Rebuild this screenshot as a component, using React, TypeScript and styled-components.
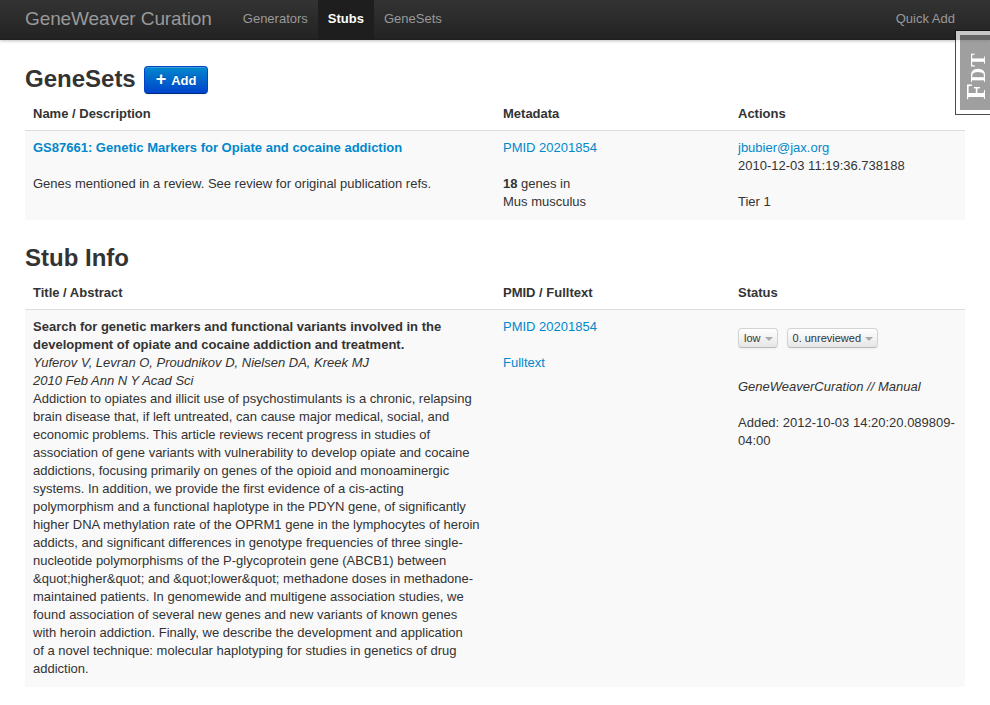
import React from "react";
import styled, { createGlobalStyle } from "styled-components";

const Global = createGlobalStyle`
  html, body { margin: 0; padding: 0; background: #fff; }
  body {
    font-family: "Liberation Sans", Arial, sans-serif;
    font-size: 13px;
    line-height: 18px;
    color: #333;
  }
  * { box-sizing: border-box; }
`;

const Navbar = styled.div`
  height: 40px;
  background: linear-gradient(to bottom, #333333, #222222);
  box-shadow: 0 1px 3px rgba(0,0,0,0.25), inset 0 -1px 0 rgba(0,0,0,0.1);
  position: relative;
  z-index: 2;
`;

const NavInner = styled.div`
  width: 940px;
  margin: 0 auto;
  height: 40px;
  display: flex;
  align-items: stretch;
`;

const Brand = styled.a`
  font-size: 19px;
  font-weight: 200;
  color: #999;
  text-decoration: none;
  display: flex;
  align-items: center;
  padding-bottom: 3px;
  margin-right: 21px;
  letter-spacing: -0.1px;
`;

const NavList = styled.div`
  display: flex;
  align-items: stretch;
`;

const NavLink = styled.a<{ $active?: boolean }>`
  display: flex;
  align-items: center;
  padding: 0 10px 3px;
  color: ${(p) => (p.$active ? "#fff" : "#999")};
  background: ${(p) => (p.$active ? "#1e1e1e" : "transparent")};
  font-weight: ${(p) => (p.$active ? "bold" : "normal")};
  text-decoration: none;
  font-size: 13px;
`;

const Spacer = styled.div`
  flex: 1;
`;

const Container = styled.div`
  width: 940px;
  margin: 0 auto;
  padding-top: 22px;
`;

const HeadingRow = styled.div`
  display: flex;
  align-items: center;
  gap: 8px;
  height: 34px;
`;

const H2 = styled.h2`
  margin: 0;
  font-size: 24px;
  line-height: 34px;
  font-weight: bold;
  color: #333;
`;

const PrimaryButton = styled.button`
  display: inline-flex;
  align-items: center;
  gap: 5px;
  height: 28px;
  padding: 0 10px 0 11px;
  margin-top: 2px;
  border: 1px solid #0044cc;
  border-bottom-color: #002a80;
  border-radius: 4px;
  background: linear-gradient(to bottom, #0088cc, #0044cc);
  color: #fff;
  font-family: "Liberation Sans", Arial, sans-serif;
  font-size: 13px;
  font-weight: bold;
  text-shadow: 0 -1px 0 rgba(0,0,0,0.25);
  box-shadow: inset 0 1px 0 rgba(255,255,255,0.2), 0 1px 2px rgba(0,0,0,0.05);
`;

const Plus = styled.span`
  font-size: 18px;
  line-height: 18px;
  margin-top: -2px;
`;

const Table = styled.table<{ $mb?: number }>`
  width: 100%;
  border-collapse: collapse;
  margin-bottom: ${(p) => p.$mb ?? 21}px;
  table-layout: fixed;
`;

const Th = styled.th<{ $w: string }>`
  width: ${(p) => p.$w};
  text-align: left;
  padding: 9px 8px 7px;
  font-weight: bold;
  line-height: 18px;
  vertical-align: bottom;
`;

const Tr = styled.tr`
  background: #f9f9f9;
`;

const Td = styled.td`
  padding: 8px 8px 9px;
  border-top: 1px solid #ddd;
  vertical-align: top;
  line-height: 18px;
`;

const Link = styled.a<{ $bold?: boolean }>`
  color: #0088cc;
  text-decoration: none;
  font-weight: ${(p) => (p.$bold ? "bold" : "normal")};
`;

const Line = styled.div<{ $gap?: number }>`
  margin-top: ${(p) => p.$gap ?? 0}px;
  white-space: nowrap;
`;

const Title = styled.div`
  font-weight: bold;
`;

const Italic = styled.div`
  font-style: italic;
`;

const Abstract = styled.div``;

const ButtonRow = styled.div`
  display: flex;
  gap: 9px;
  margin-top: 10px;
`;

const MiniButton = styled.span`
  display: inline-flex;
  align-items: center;
  gap: 4px;
  height: 20px;
  padding: 0 4px 0 5px;
  font-size: 11px;
  line-height: 17px;
  color: #333;
  border: 1px solid #d4d4d4;
  border-bottom-color: #bbb;
  border-radius: 4px;
  background: linear-gradient(to bottom, #ffffff, #e6e6e6);
  box-shadow: inset 0 1px 0 rgba(255,255,255,0.2), 0 1px 2px rgba(0,0,0,0.05);
`;

const Caret = styled.span`
  width: 0;
  height: 0;
  border-left: 4px solid transparent;
  border-right: 4px solid transparent;
  border-top: 4px solid #aaa;
  margin-top: 1px;
`;

const DebugHandle = styled.div`
  position: fixed;
  top: 30px;
  right: 0;
  background: #fff;
  border: 1px solid #111;
  border-right: none;
  opacity: 0.75;
  z-index: 10;
`;

const DebugButton = styled.a`
  display: flex;
  align-items: center;
  justify-content: center;
  width: 34px;
  height: 83px;
  border-top: 4px solid #fff;
  border-bottom: 4px solid #fff;
  border-left: 4px solid #fff;
  background: rgba(0,0,0,0.5);
  text-decoration: none;
`;

const DebugText = styled.span`
  display: inline-block;
  transform: rotate(-90deg);
  font-family: "Liberation Serif", "Times New Roman", serif;
  font-weight: bold;
  color: #fff;
  white-space: nowrap;
  font-size: 20px;
  letter-spacing: 1px;
  margin-left: 3px;
  margin-top: 6px;
`;

const BigF = styled.span`
  font-size: 27px;
`;

const abstractLines = [
  "Addiction to opiates and illicit use of psychostimulants is a chronic, relapsing",
  "brain disease that, if left untreated, can cause major medical, social, and",
  "economic problems. This article reviews recent progress in studies of",
  "association of gene variants with vulnerability to develop opiate and cocaine",
  "addictions, focusing primarily on genes of the opioid and monoaminergic",
  "systems. In addition, we provide the first evidence of a cis-acting",
  "polymorphism and a functional haplotype in the PDYN gene, of significantly",
  "higher DNA methylation rate of the OPRM1 gene in the lymphocytes of heroin",
  "addicts, and significant differences in genotype frequencies of three single-",
  "nucleotide polymorphisms of the P-glycoprotein gene (ABCB1) between",
  "&quot;higher&quot; and &quot;lower&quot; methadone doses in methadone-",
  "maintained patients. In genomewide and multigene association studies, we",
  "found association of several new genes and new variants of known genes",
  "with heroin addiction. Finally, we describe the development and application",
  "of a novel technique: molecular haplotyping for studies in genetics of drug",
  "addiction.",
];

export default function App() {
  return (
    <>
      <Global />
      <Navbar>
        <NavInner>
          <Brand href="#">GeneWeaver Curation</Brand>
          <NavList>
            <NavLink href="#">Generators</NavLink>
            <NavLink href="#" $active>Stubs</NavLink>
            <NavLink href="#">GeneSets</NavLink>
          </NavList>
          <Spacer />
          <NavList>
            <NavLink href="#">Quick Add</NavLink>
          </NavList>
        </NavInner>
      </Navbar>

      <Container>
        <HeadingRow>
          <H2>GeneSets</H2>
          <PrimaryButton>
            <Plus>+</Plus>Add
          </PrimaryButton>
        </HeadingRow>
        <Table>
          <thead>
            <tr>
              <Th $w="50%">Name / Description</Th>
              <Th $w="25%">Metadata</Th>
              <Th $w="25%">Actions</Th>
            </tr>
          </thead>
          <tbody>
            <Tr>
              <Td>
                <Line>
                  <Link href="#" $bold>GS87661: Genetic Markers for Opiate and cocaine addiction</Link>
                </Line>
                <Line $gap={18}>Genes mentioned in a review. See review for original publication refs.</Line>
              </Td>
              <Td>
                <Line>
                  <Link href="#">PMID 20201854</Link>
                </Line>
                <Line $gap={18}>
                  <b>18</b> genes in
                </Line>
                <Line>Mus musculus</Line>
              </Td>
              <Td>
                <Line>
                  <Link href="#">jbubier@jax.org</Link>
                </Line>
                <Line>2010-12-03 11:19:36.738188</Line>
                <Line $gap={18}>Tier 1</Line>
              </Td>
            </Tr>
          </tbody>
        </Table>

        <HeadingRow>
          <H2>Stub Info</H2>
        </HeadingRow>
        <Table>
          <thead>
            <tr>
              <Th $w="50%">Title / Abstract</Th>
              <Th $w="25%">PMID / Fulltext</Th>
              <Th $w="25%">Status</Th>
            </tr>
          </thead>
          <tbody>
            <Tr>
              <Td>
                <Title>
                  <Line>Search for genetic markers and functional variants involved in the</Line>
                  <Line>development of opiate and cocaine addiction and treatment.</Line>
                </Title>
                <Italic>
                  <Line>Yuferov V, Levran O, Proudnikov D, Nielsen DA, Kreek MJ</Line>
                  <Line>2010 Feb Ann N Y Acad Sci</Line>
                </Italic>
                <Abstract>
                  {abstractLines.map((l, i) => (
                    <Line key={i}>{l}</Line>
                  ))}
                </Abstract>
              </Td>
              <Td>
                <Line>
                  <Link href="#">PMID 20201854</Link>
                </Line>
                <Line $gap={18}>
                  <Link href="#">Fulltext</Link>
                </Line>
              </Td>
              <Td>
                <ButtonRow>
                  <MiniButton>
                    low <Caret />
                  </MiniButton>
                  <MiniButton>
                    0. unreviewed <Caret />
                  </MiniButton>
                </ButtonRow>
                <Italic>
                  <Line $gap={30}>GeneWeaverCuration // Manual</Line>
                </Italic>
                <Line $gap={18}>Added: 2012-10-03 14:20:20.089809-</Line>
                <Line>04:00</Line>
              </Td>
            </Tr>
          </tbody>
        </Table>
      </Container>

      <DebugHandle>
        <DebugButton href="#">
          <DebugText>
            <BigF>F</BigF>DT
          </DebugText>
        </DebugButton>
      </DebugHandle>
    </>
  );
}
